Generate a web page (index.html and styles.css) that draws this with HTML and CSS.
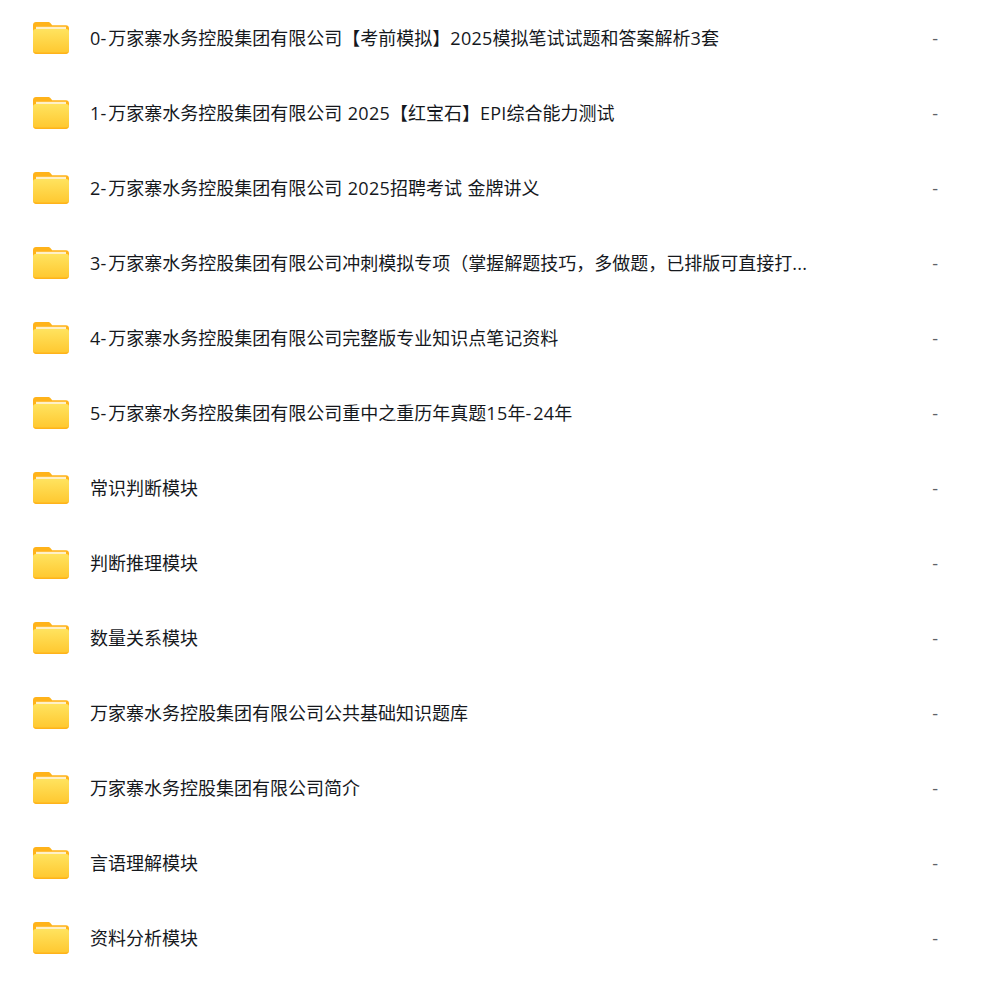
FILE: index.html
```html
<!DOCTYPE html>
<html lang="zh-CN">
<head>
<meta charset="utf-8">
<title>文件列表</title>
<link rel="stylesheet" href="styles.css">
</head>
<body>
<svg class="defs" width="0" height="0" aria-hidden="true">
  <defs>
    <linearGradient id="fb" x1="0" y1="0" x2="0" y2="1"><stop offset="0" stop-color="#ffe35f"/><stop offset="1" stop-color="#ffc72e"/></linearGradient>
    <symbol id="folder" viewBox="0 0 36 32">
      <path d="M0 3C0 1.300 1.300 0 3 0H15C16.400 0 17.200 .6 18 1.700L19.200 3.200H33C34.700 3.200 36 4.500 36 6.200V12H0Z" fill="#ffb31a"/>
      <path d="M3 4.800H33V9H3Z" fill="#fff0c8"/>
      <path d="M0 10C0 7.800 1 7 3 7H33C35 7 36 7.800 36 10V28.500C36 30.500 34.500 32 32.500 32H3.500C1.500 32 0 30.500 0 28.500Z" fill="url(#fb)"/>
      <path d="M0 28.500C0 30.500 1.500 32 3.500 32H32.500C34.500 32 36 30.500 36 28.500V28C36 29.800 34.500 30.500 32.500 30.500H3.500C1.500 30.500 0 29.800 0 28Z" fill="#ffb31a"/>
    </symbol>
  </defs>
</svg>
<ul class="list">
  <li class="row"><svg class="icon"><use href="#folder"/></svg><span class="name"><span class="num">0</span><span class="hy">-</span>万家寨水务控股集团有限公司【考前模拟】<span class="num">2025</span>模拟笔试试题和答案解析<span class="num">3</span>套</span><span class="size">-</span></li>
  <li class="row"><svg class="icon"><use href="#folder"/></svg><span class="name"><span class="num">1</span><span class="hy">-</span>万家寨水务控股集团有限公司 <span class="num">2025</span>【红宝石】<span class="num">EPI</span>综合能力测试</span><span class="size">-</span></li>
  <li class="row"><svg class="icon"><use href="#folder"/></svg><span class="name"><span class="num">2</span><span class="hy">-</span>万家寨水务控股集团有限公司 <span class="num">2025</span>招聘考试 金牌讲义</span><span class="size">-</span></li>
  <li class="row"><svg class="icon"><use href="#folder"/></svg><span class="name"><span class="num">3</span><span class="hy">-</span>万家寨水务控股集团有限公司冲刺模拟专项（掌握解题技巧，多做题，已排版可直接打<span class="num">...</span></span><span class="size">-</span></li>
  <li class="row"><svg class="icon"><use href="#folder"/></svg><span class="name"><span class="num">4</span><span class="hy">-</span>万家寨水务控股集团有限公司完整版专业知识点笔记资料</span><span class="size">-</span></li>
  <li class="row"><svg class="icon"><use href="#folder"/></svg><span class="name"><span class="num">5</span><span class="hy">-</span>万家寨水务控股集团有限公司重中之重历年真题<span class="num">15</span>年<span class="hy">-</span><span class="num">24</span>年</span><span class="size">-</span></li>
  <li class="row"><svg class="icon"><use href="#folder"/></svg><span class="name">常识判断模块</span><span class="size">-</span></li>
  <li class="row"><svg class="icon"><use href="#folder"/></svg><span class="name">判断推理模块</span><span class="size">-</span></li>
  <li class="row"><svg class="icon"><use href="#folder"/></svg><span class="name">数量关系模块</span><span class="size">-</span></li>
  <li class="row"><svg class="icon"><use href="#folder"/></svg><span class="name">万家寨水务控股集团有限公司公共基础知识题库</span><span class="size">-</span></li>
  <li class="row"><svg class="icon"><use href="#folder"/></svg><span class="name">万家寨水务控股集团有限公司简介</span><span class="size">-</span></li>
  <li class="row"><svg class="icon"><use href="#folder"/></svg><span class="name">言语理解模块</span><span class="size">-</span></li>
  <li class="row"><svg class="icon"><use href="#folder"/></svg><span class="name">资料分析模块</span><span class="size">-</span></li>
</ul>
</body>
</html>
```
FILE: styles.css
```css
html, body {
  margin: 0;
  padding: 0;
  background: #fff;
}
body {
  font-family: "Open Sans", "Noto Sans CJK SC", sans-serif;
  font-size: 18px;
  color: #15181d;
  overflow: hidden;
}
.defs {
  display: block;
  height: 0;
}
.list {
  list-style: none;
  margin: 0;
  padding: 0;
}
.row {
  display: flex;
  align-items: center;
  height: 75px;
  padding-left: 33px;
  padding-right: 46px;
}
.icon {
  width: 36px;
  height: 32px;
  flex: none;
  margin-right: 21px;
}
.name {
  white-space: nowrap;
  line-height: 24px;
  word-spacing: .8px;
}
.num {
  letter-spacing: .25px;
}
.hy {
  letter-spacing: 2px;
}
.size {
  margin-left: auto;
  color: #5f6368;
  font-size: 18px;
  line-height: 24px;
}
```
